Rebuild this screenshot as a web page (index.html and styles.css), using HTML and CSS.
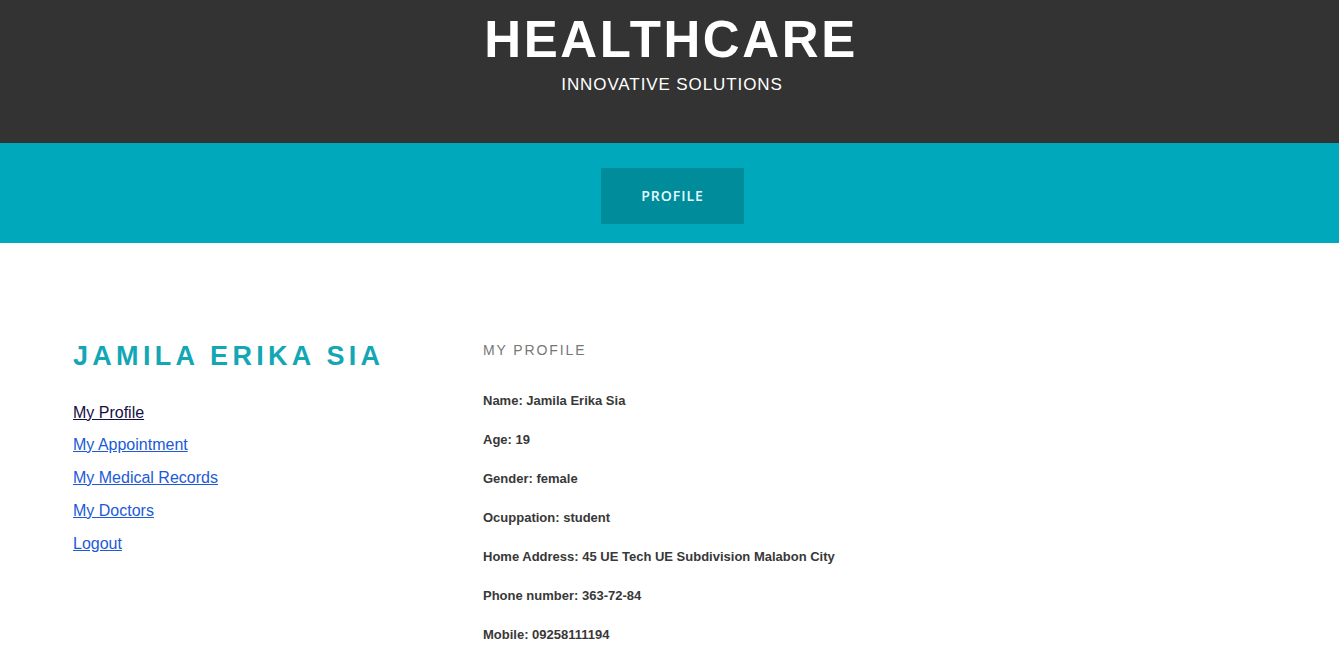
FILE: index.html
```html
<!DOCTYPE html>
<html>
<head>
<meta charset="utf-8">
<link rel="stylesheet" href="styles.css">
</head>
<body>
<header class="top">
  <h1 class="brand">HEALTHCARE</h1>
  <p class="tagline">INNOVATIVE SOLUTIONS</p>
</header>
<nav class="band">
  <a class="tab" href="#">PROFILE</a>
</nav>
<main class="content">
  <aside class="side">
    <h2 class="user">JAMILA ERIKA SIA</h2>
    <ul class="menu">
      <li><a class="visited" href="#">My Profile</a></li>
      <li><a href="#">My Appointment</a></li>
      <li><a href="#">My Medical Records</a></li>
      <li><a href="#">My Doctors</a></li>
      <li><a href="#">Logout</a></li>
    </ul>
  </aside>
  <section class="info">
    <h3 class="info-title">MY PROFILE</h3>
    <p class="row">Name: Jamila Erika Sia</p>
    <p class="row">Age: 19</p>
    <p class="row">Gender: female</p>
    <p class="row">Ocuppation: student</p>
    <p class="row">Home Address: 45 UE Tech UE Subdivision Malabon City</p>
    <p class="row">Phone number: 363-72-84</p>
    <p class="row">Mobile: 09258111194</p>
  </section>
</main>
</body>
</html>
```
FILE: styles.css
```css
* { box-sizing: border-box; }
html, body { margin: 0; padding: 0; }
body { font-family: "Liberation Sans", Arial, sans-serif; background: #fff; }

.top {
  background: #333333;
  height: 143px;
  text-align: center;
  padding-top: 14px;
}
.brand {
  margin: 0;
  color: #fff;
  font-size: 51px;
  line-height: 52px;
  font-weight: bold;
  letter-spacing: 2.6px;
  padding-left: 3px;
}
.tagline {
  margin: 9px 0 0;
  color: #fff;
  font-size: 17px;
  line-height: 20px;
  letter-spacing: 0.9px;
  padding-left: 5px;
}

.band {
  background: #00a8bc;
  height: 100px;
  display: flex;
  justify-content: center;
  align-items: flex-start;
  padding-top: 25px;
}
.tab {
  display: block;
  width: 143px;
  height: 56px;
  line-height: 56px;
  text-align: center;
  background: #008c9b;
  color: #e4fdff;
  font-family: "Open Sans", sans-serif;
  font-weight: 600;
  font-size: 14px;
  letter-spacing: 1px;
  text-decoration: none;
  margin-left: 6px;
}

.content {
  display: flex;
  padding: 95px 0 0 73px;
}
.side { width: 410px; }
.user {
  margin: 0;
  color: #13a6b5;
  font-size: 27px;
  line-height: 32px;
  font-weight: bold;
  letter-spacing: 4.3px;
  padding-top: 2px;
}
.menu {
  list-style: none;
  margin: 32px 0 0;
  padding: 0;
}
.menu li {
  font-size: 16px;
  line-height: 18px;
  margin-bottom: 15px;
}
.menu li:first-child { margin-bottom: 14px; }
.menu a { color: #1c5ad8; text-decoration: underline; }
.menu a.visited { color: #160f44; }

.info { flex: 1; }
.info-title {
  margin: 0;
  color: #777;
  font-size: 14px;
  line-height: 16px;
  font-weight: normal;
  letter-spacing: 1.9px;
  padding-top: 4px;
}
.row {
  margin: 0;
  color: #383838;
  font-size: 13px;
  font-weight: bold;
  line-height: 16px;
  margin-top: 23px;
}
.info-title + .row { margin-top: 35px; }
```
